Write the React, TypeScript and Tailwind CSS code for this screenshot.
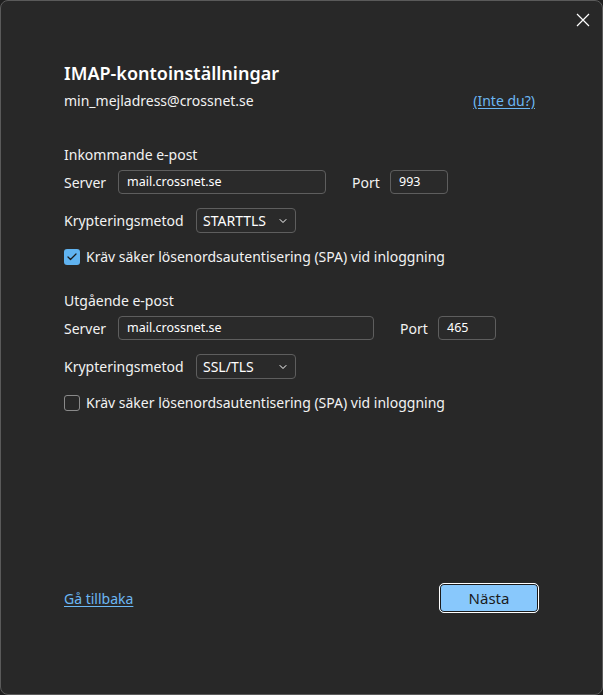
import { Check, ChevronDown } from "lucide-react";

const font = { fontFamily: '"Noto Sans", "Open Sans", sans-serif' };

function TextBox({ value, width }: { value: string; width: string }) {
  return (
    <div
      className={`${width} h-[24px] rounded-[4px] border border-[#5e5e5e] bg-[#2a2a2a] pl-[8px] flex items-center text-[12.5px] text-white`}
    >
      {value}
    </div>
  );
}

function Select({ value }: { value: string }) {
  return (
    <div className="w-[100px] h-[25px] rounded-[4px] border border-[#5e5e5e] bg-[#2a2a2a] pl-[6px] pr-[6px] flex items-center justify-between text-[14px] text-white">
      <span>{value}</span>
      <ChevronDown size={12} strokeWidth={2} className="text-white" />
    </div>
  );
}

function ServerBlock({
  heading,
  server,
  port,
  serverWidth,
  crypto,
  spa,
}: {
  heading: string;
  server: string;
  port: string;
  serverWidth: string;
  crypto: string;
  spa: boolean;
}) {
  return (
    <div className="flex flex-col">
      <div className="h-[20px] leading-[20px] text-[14px]">{heading}</div>
      <div className="mt-[5px] flex items-center h-[24px]">
        <span className="w-[54px] text-[14px]">Server</span>
        <TextBox value={server} width={serverWidth} />
        <span className="ml-[26px] w-[38px] text-[14px]">Port</span>
        <TextBox value={port} width="w-[58px]" />
      </div>
      <div className="mt-[14px] flex items-center h-[25px]">
        <span className="w-[132px] text-[14px]">Krypteringsmetod</span>
        <Select value={crypto} />
      </div>
      <label className="mt-[15px] flex items-center h-[17px] text-[14px]">
        {spa ? (
          <span className="w-[16px] h-[16px] rounded-[3px] bg-[#60b3f0] flex items-center justify-center">
            <Check size={12} strokeWidth={2.5} className="text-[#1a1a1a]" />
          </span>
        ) : (
          <span className="w-[16px] h-[16px] rounded-[3px] border border-[#8a8a8a]" />
        )}
        <span className="ml-[6px]">Kräv säker lösenordsautentisering (SPA) vid inloggning</span>
      </label>
    </div>
  );
}

export default function App() {
  return (
    <div className="w-[603px] h-[695px] bg-[#1f1f1f]" style={font}>
      <div className="relative w-full h-full rounded-[8px] border border-[#5a5a5a] bg-[#282828] text-[#f2f2f2] flex flex-col pl-[63px] pr-[67px] pt-[58px] pb-[81px]">
        <button className="absolute left-[575px] top-[12px] w-[14px] h-[14px] text-white">
          <svg width="14" height="14" viewBox="0 0 14 14" fill="none" stroke="currentColor" strokeWidth="1.2">
            <path d="M1 1 L13 13 M13 1 L1 13" />
          </svg>
        </button>

        <h1 className="h-[28px] leading-[28px] text-[18px] font-semibold text-white">IMAP-kontoinställningar</h1>
        <div className="mt-[3px] h-[20px] flex items-center justify-between text-[14px]">
          <span>min_mejladress@crossnet.se</span>
          <a className="text-[#6cb7f3] underline underline-offset-2">(Inte du?)</a>
        </div>

        <div className="mt-[35px]">
          <ServerBlock
            heading="Inkommande e-post"
            server="mail.crossnet.se"
            port="993"
            serverWidth="w-[208px]"
            crypto="STARTTLS"
            spa
          />
        </div>
        <div className="mt-[26px]">
          <ServerBlock
            heading="Utgående e-post"
            server="mail.crossnet.se"
            port="465"
            serverWidth="w-[256px]"
            crypto="SSL/TLS"
            spa={false}
          />
        </div>

        <div className="mt-auto flex items-center justify-between">
          <a className="text-[14px] text-[#6cb7f3] underline underline-offset-2">Gå tillbaka</a>
          <button className="-mr-[4px] w-[100px] h-[30px] rounded-[5px] border border-white bg-[#88c8fc] text-[#1b1b1b] text-[15px] shadow-[inset_0_0_0_1px_#1a1a1a]">
            Nästa
          </button>
        </div>
      </div>
    </div>
  );
}
